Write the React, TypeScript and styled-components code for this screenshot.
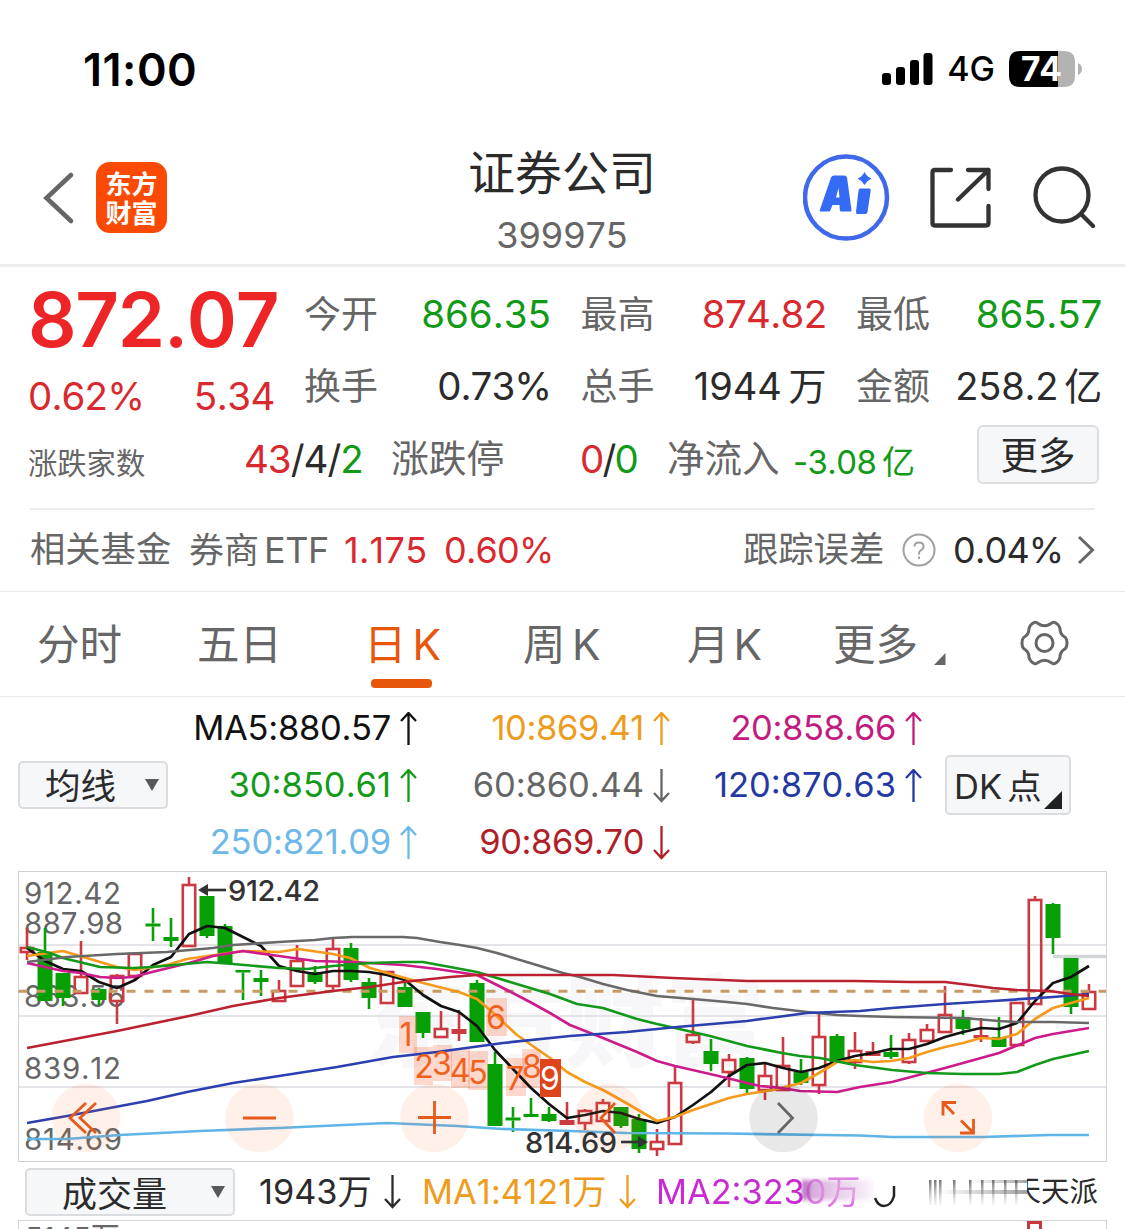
import React from 'react';
import styled, { createGlobalStyle } from 'styled-components';

const RED = '#d8292f';
const GREEN = '#119a16';
const DARK = '#2b2b2b';
const GREY = '#666666';
const ORANGE = '#e8560c';

const Global = createGlobalStyle`
  * { box-sizing: border-box; }
  html, body { margin: 0; padding: 0; background: #fff; }
  body { font-family: Inter, "Noto Sans CJK SC", sans-serif; font-kerning: none; }
  svg { display: block; flex: none; }
`;

const Screen = styled.div`
  width: 1125px;
  height: 1229px;
  overflow: hidden;
  background: #fff;
  display: flex;
  flex-direction: column;
`;

const Txt = styled.span<{ $size: number; $color?: string; $weight?: number; $ls?: number; $ws?: number }>`
  font-size: ${p => p.$size}px;
  line-height: 1;
  color: ${p => p.$color || DARK};
  font-weight: ${p => p.$weight || 400};
  letter-spacing: ${p => p.$ls || 0}px;
  word-spacing: ${p => p.$ws || 0}px;
  white-space: nowrap;
`;

/* status bar */
const StatusBar = styled.div`
  height: 138px;
  flex: none;
  padding: 0 42px 0 83px;
  display: flex;
  justify-content: space-between;
`;
const StatusSide = styled.div`
  height: 138px;
  display: flex;
  align-items: center;
  gap: 14px;
`;

/* header */
const Header = styled.header`
  height: 129px;
  flex: none;
  border-bottom: 3px solid #ececec;
  display: grid;
  grid-template-columns: 43px 53px 71px 237px 316px 83px 87px 40px 62px 41px 64px;
`;
const HeadCell = styled.div<{ $col: number; $top: number }>`
  grid-column: ${p => p.$col};
  grid-row: 1;
  padding-top: ${p => p.$top}px;
`;
const AppLogo = styled.div`
  width: 71px;
  height: 71px;
  border-radius: 14px;
  background: #fb4a04;
  color: #fff;
  font: 700 26px/29px "Noto Sans CJK SC", sans-serif;
  text-align: center;
  padding-top: 6px;
`;
const TitleBlock = styled.div`
  grid-column: 5;
  grid-row: 1;
  display: flex;
  flex-direction: column;
  align-items: center;
  padding-top: 11px;
  gap: 21px;
`;

/* quote */
const Quote = styled.section`
  height: 241px;
  flex: none;
  padding-left: 28px;
`;
const QuoteTop = styled.div`
  height: 156px;
  padding-top: 11px;
  display: flex;
`;
const PriceBlock = styled.div`
  width: 276px;
`;
const BigPrice = styled.div`
  height: 82px;
  display: flex;
  align-items: center;
`;
const PriceDelta = styled.div`
  width: 247px;
  height: 73px;
  display: flex;
  align-items: center;
  justify-content: space-between;
`;
const Stats = styled.div`
  display: grid;
  grid-template-columns: 247px 246px 246px;
  grid-template-rows: 72px 72px;
  column-gap: 29.5px;
`;
const Stat = styled.div`
  display: flex;
  align-items: center;
  justify-content: space-between;
`;
const Breadth = styled.div`
  height: 72px;
  display: grid;
  grid-template-columns: 216px 147px 189px 87px 126px 184px 122px;
  align-items: center;
`;
const Cell = styled.div<{ $shift?: number }>`
  display: flex;
  align-items: center;
  padding-top: ${p => p.$shift || 0}px;
`;
const MoreButton = styled.button`
  width: 122px;
  height: 59px;
  margin-top: -9px;
  padding: 2px 0 0;
  border: 2px solid #dcdde0;
  border-radius: 6px;
  background: #f6f7f9;
  font-family: inherit;
`;

/* fund row */
const FundRow = styled.section`
  height: 84px;
  flex: none;
  border-bottom: 1px solid #e9e9ec;
  padding: 0 30px;
`;
const FundInner = styled.div`
  height: 82px;
  border-top: 2px solid #ececec;
  display: grid;
  grid-template-columns: 159px 75px 80px 100px 299px 159px 51px 124px 18px;
  align-items: center;
`;

/* tabs */
const Tabs = styled.nav`
  height: 105px;
  flex: none;
  border-bottom: 1px solid #e9e9ec;
  padding-left: 37px;
  display: grid;
  grid-template-columns: 160px 167px 159px 164px 146px 101px 86px 49px;
`;
const Tab = styled.div<{ $active?: boolean }>`
  height: 105px;
  display: flex;
  flex-direction: column;
  padding-top: 32px;
  color: ${p => (p.$active ? ORANGE : GREY)};
  &::after {
    content: '';
    display: ${p => (p.$active ? 'block' : 'none')};
    width: 61px;
    height: 9px;
    margin: 12px 0 0 7px;
    border-radius: 4px;
    background: ${ORANGE};
  }
`;
const GearTab = styled(Tab)`
  padding-top: 28px;
`;

/* averages */
const Averages = styled.section`
  height: 174px;
  flex: none;
  padding: 2px 0 0 18px;
  display: grid;
  grid-template-columns: 150px 249px 253px 252px 23px 126px;
  align-items: center;
`;
const AvgColumn = styled.div`
  align-self: start;
  padding-top: 1px;
`;
const AvgItem = styled.div`
  height: 57px;
  display: flex;
  align-items: center;
  justify-content: flex-end;
  gap: 9px;
`;
const Dropdown = styled.div<{ $w: number; $h: number; $pl: number; $pr: number }>`
  width: ${p => p.$w}px;
  height: ${p => p.$h}px;
  border: 2px solid #dadce0;
  border-radius: 5px;
  background: #f6f7f9;
  display: flex;
  align-items: center;
  justify-content: space-between;
  padding: 0 ${p => p.$pr}px 0 ${p => p.$pl}px;
  & > span { padding-top: 4px; }
`;
const DkButton = styled(Dropdown)`
  grid-column: 6;
  & > svg { align-self: flex-end; margin-bottom: 4px; }
`;

/* chart */
const ChartWrap = styled.section`
  height: 291px;
  flex: none;
  padding-left: 18px;
`;

/* volume */
const VolumeRow = styled.section`
  height: 58px;
  flex: none;
  padding: 2px 0 0 25px;
  display: grid;
  grid-template-columns: 234px 125px 38px 197px 37px 469px;
  align-items: center;
`;
const Smear = styled.div`
  display: flex;
  align-items: center;
  height: 56px;
`;
const Faded = styled.div`
  position: relative;
  width: 218px;
  height: 40px;
  overflow: hidden;
  display: flex;
  align-items: center;
  -webkit-mask-image: linear-gradient(90deg, #000 66%, rgba(0, 0, 0, 0.6) 72%, rgba(0, 0, 0, 0.7) 100%);
  &::after {
    content: '';
    position: absolute;
    left: 146px;
    top: 8px;
    width: 72px;
    height: 20px;
    background: linear-gradient(90deg, rgba(150, 30, 160, 0.75), rgba(200, 130, 205, 0.65) 45%, rgba(240, 225, 242, 0.5));
    filter: blur(2px);
  }
`;
const HalfGlyph = styled.div`
  width: 14px;
  height: 30px;
  overflow: hidden;
  display: flex;
  justify-content: flex-end;
`;
const VolumePanel = styled.section`
  width: 1089px;
  height: 30px;
  flex: none;
  margin-left: 18px;
  border: 1px solid #d4d4d4;
  padding: 2px 0 0 6px;
  display: flex;
`;
const VolumeLabel = styled.div`
  width: 990px;
`;
const VolumeBar = styled.div`
  width: 15px;
  height: 28px;
  margin: -2px 0 0 12px;
  border: 3px solid #c9363b;
`;

const FAN = 'Inter, "Noto Sans CJK SC", sans-serif';

function Arrow({ color, down }: { color: string; down?: boolean }) {
  return (
    <svg width="17" height="34" viewBox="0 0 17 34" fill="none" stroke={color} strokeWidth="2.3">
      {down ? <path d="M8.5 0V32M1 24L8.5 32L16 24" /> : <path d="M8.5 33V1M1 9L8.5 1L16 9" />}
    </svg>
  );
}

function Caret() {
  return (
    <svg width="14" height="12" viewBox="0 0 14 12"><path d="M0 0H14L7 12Z" fill="#58595b" /></svg>
  );
}

type Candle = [number, number, number, number, 'r' | 'g' | 'f'];
// [high, body top, body bottom, low, kind]: r hollow red, f solid red, g solid green
const candles: Candle[] = [
  [928, 947, 952, 960, 'r'], [928, 952, 1001, 1001, 'g'], [973, 973, 998, 1006, 'g'], [941, 976, 993, 993, 'r'],
  [988, 989, 1000, 1005, 'g'], [974, 975, 1001, 1024, 'r'], [953, 953, 976, 981, 'r'], [908, 923.5, 926.5, 941, 'g'],
  [918, 937, 941, 947, 'g'], [877, 884, 946, 946, 'r'], [896, 896, 936, 938, 'g'], [924, 926, 964, 964, 'g'],
  [970, 970, 972.5, 1000, 'g'], [970, 978, 982, 996, 'g'], [980, 990, 1001, 1001, 'r'], [945, 960, 986, 986, 'r'],
  [966, 972, 982, 984, 'g'], [939, 948, 986, 990, 'r'], [943, 948, 980, 982, 'g'], [978, 982, 998, 1009, 'g'],
  [971, 971, 1003, 1003, 'r'], [978, 987, 1007, 1007, 'g'], [1012, 1012, 1033, 1038, 'g'], [1011, 1028, 1037, 1037, 'r'],
  [1010, 1029, 1034, 1041, 'f'], [980, 983, 1042, 1042, 'g'], [1052, 1064, 1126, 1126, 'g'], [1107, 1117.5, 1120.5, 1132, 'g'],
  [1098, 1114, 1117, 1117, 'g'], [1107, 1114, 1121, 1122, 'g'], [1102, 1120, 1125, 1125, 'f'], [1109, 1110, 1123, 1130, 'r'],
  [1099, 1102, 1121, 1121, 'r'], [1107, 1107, 1126, 1128, 'g'], [1114, 1119, 1149, 1153, 'g'], [1129, 1141, 1149, 1156, 'r'],
  [1065, 1082, 1144, 1144, 'r'], [998, 1034, 1042, 1044, 'r'], [1039, 1051, 1064, 1071, 'g'], [1054, 1059, 1072, 1087, 'r'],
  [1057, 1058, 1089, 1093, 'g'], [1064, 1075, 1090, 1100, 'r'], [1037, 1065, 1090, 1090, 'r'], [1059, 1072, 1083, 1085, 'g'],
  [1014, 1036, 1085, 1094, 'r'], [1034, 1036, 1062, 1062, 'g'], [1032, 1050, 1062, 1069, 'r'], [1042, 1051, 1056, 1056, 'f'],
  [1035, 1052, 1057, 1059, 'g'], [1033, 1039, 1062, 1064, 'r'], [1024, 1029, 1041, 1041, 'r'], [986, 1014, 1032, 1032, 'r'],
  [1010, 1017, 1029, 1035, 'g'], [1018, 1035, 1038, 1042, 'f'], [1017, 1037, 1047, 1047, 'g'], [1002, 1002, 1045, 1045, 'r'],
  [896, 899, 1004, 1004, 'r'], [903, 904, 938, 954, 'g'], [958, 958, 1007, 1014, 'g'], [984, 991, 1009, 1010, 'r'],
];

const lines: [string, string][] = [
  ['#5fb4e8', '27,1139 67,1139 120,1135 200,1131 279,1128 387,1123 457,1126 503,1129 570,1131 627,1133 727,1133.5 860,1135.5 892,1137 983,1137 1050,1135 1089,1135'],
  ['#111111', '27,948 45,961 63,969 81,971 99,982 117,988 135,980 153,965 171,957 189,934 207,926 225,928 243,937 261,946 279,966 297,971 315,974 333,971 351,971 369,972 387,975 405,980 423,995 441,1006 459,1012 477,1026 495,1050 513,1069 531,1088 549,1104 567,1118 585,1115 603,1111 621,1113 639,1119 657,1123 675,1117 693,1105 711,1092 729,1076 747,1065 765,1063 783,1068 801,1072 819,1068 837,1061 855,1056 873,1053 891,1049 909,1049 927,1044 945,1037 963,1032 981,1028 999,1029 1017,1023 1035,1001 1053,983 1071,977 1089,966'],
  ['#f59a1b', '27,956 63,951 90,959 117,967 135,970 167,965 187,959 243,951 279,952 298,949 333,954 350,958 370,968 405,978 423,983 459,992 477,999 490,1010 517,1035 550,1058 567,1072 585,1082 603,1090 621,1100 657,1121 675,1117 693,1110 711,1104 729,1098 747,1094 773,1090 801,1083 819,1073 837,1062 855,1060 873,1062 891,1061 909,1058 927,1052 945,1047 963,1043 981,1038 999,1039 1017,1034 1035,1019 1053,1008 1089,998'],
  ['#cc1c8c', '27,963 63,971 81,973 100,977 117,978 133,977 152,972 189,963 213,956 243,951 279,956 315,961 353,962 403,965 437,969 477,975 503,988 530,1002 550,1013 570,1025 603,1038 637,1052 657,1061 675,1066 710,1074 727,1078 747,1083 760,1086 782,1088 800,1091 837,1092 860,1087 892,1082 945,1068 963,1063 981,1058 999,1053 1035,1038 1053,1034 1089,1028'],
  ['#12991a', '27,947 50,953 63,958 100,967 133,968 152,967 207,962 233,964 279,968 307,969 333,966 370,963 403,962 423,962 450,967 477,972 510,982 550,994 577,1004 603,1008 637,1019 657,1024 675,1028 710,1036 747,1046 782,1053 800,1056 820,1058 840,1062 855,1065 892,1070 927,1073 963,1074 999,1074 1017,1072 1035,1065 1053,1059 1089,1051'],
  ['#696969', '27,962 67,957 117,954 167,952 213,948 233,945 279,942 315,940 333,938 353,937 403,937 417,938 440,942 460,945 477,948 497,953 530,963 563,973 580,977 603,984 627,990 657,996 693,999 727,1002 747,1004 773,1008 807,1012 837,1015 860,1016 892,1017 963,1018 999,1021 1017,1022 1053,1022 1089,1023'],
  ['#2b3fb0', '27,1123 67,1116 147,1101 187,1092 233,1083 279,1076 337,1067 393,1057 437,1052 503,1043 570,1036 627,1032 677,1027 747,1021 807,1013 860,1011 892,1008 945,1004 993,1001 1053,997 1089,994'],
  ['#bb2230', '27,1048 117,1031 189,1016 233,1006 279,998 333,991 370,987 403,982 450,977 477,975 613,975 673,978 747,981 855,981 910,982 945,982 970,985 993,988 1017,990 1050,991 1070,994 1089,996'],
];

const marks: [string, number, number, number, number, number, number][] = [
  ['1', 399, 1016, 18, 37, 406, 1046], ['2', 414, 1047, 19, 38, 424, 1078], ['3', 433, 1045, 19, 36, 442, 1075],
  ['4', 451, 1049, 19, 39, 460, 1082], ['5', 468, 1051, 20, 39, 478, 1084], ['6', 486, 998, 21, 38, 496, 1029],
  ['7', 506, 1058, 20, 38, 515, 1090], ['8', 522, 1049, 19, 39, 532, 1078],
];

const axis: [string, number, number][] = [
  ['912.42', 904, 97], ['887.98', 934, 99], ['863.56', 1007, 101], ['839.12', 1079, 97], ['814.69', 1150, 98],
];

function Chart() {
  return (
    <svg width="1089" height="291" viewBox="18 871 1089 291" fill="none" fontFamily={FAN}>
      <text x="365" y="1059" fontSize="100" fontWeight="900" fill="#f7f7f9" textLength="400">东方财富</text>
      {[945, 1016, 1087].map(y => <path key={y} d={`M19 ${y}H1106`} stroke="#e4e4e8" strokeWidth="2" />)}
      <rect x="18.5" y="871.5" width="1088" height="290" stroke="#d2d2d2" />
      <path d="M1053 956.5H1106" stroke="#d3d6d8" strokeWidth="3.5" />
      {axis.map(([t, y, w]) => (
        <text key={t} x="24" y={y} fontSize="29.5" fill="#666" textLength={w}>{t}</text>
      ))}
      {candles.map(([hi, top, bot, lo, kind], i) => {
        const x = 27 + i * 18;
        const color = kind === 'g' ? '#06a006' : '#cb3a40';
        return (
          <g key={i} stroke={color} strokeWidth="2.6">
            <path d={`M${x} ${hi}V${top}M${x} ${bot}V${lo}`} />
            {kind === 'r'
              ? <rect x={x - 6.2} y={top + 1} width="12.4" height={bot - top - 1} />
              : <rect x={x - 7.5} y={top} width="15" height={bot - top} fill={color} stroke="none" />}
          </g>
        );
      })}
      <path d="M18.5 991.3H1106" stroke="#c69b63" strokeWidth="3" strokeDasharray="9 9" />
      {marks.map(([t, x, y, w, h]) => <rect key={t} x={x} y={y} width={w} height={h} fill="#fa5a28" fillOpacity="0.24" />)}
      {lines.map(([c, p]) => <polyline key={c} points={p} stroke={c} strokeWidth="2.7" strokeLinejoin="round" />)}
      {marks.map(([t, , , , , tx, ty]) => (
        <text key={t} x={tx} y={ty} fontSize="32" fill="#f2611c" textAnchor="middle">{t}</text>
      ))}
      <rect x="540" y="1059" width="21" height="38" fill="#df451d" />
      <text x="550" y="1090" fontSize="32" fill="#fff" textAnchor="middle">9</text>
      {[86, 259.5, 434.5, 609, 958].map(x => <circle key={x} cx={x} cy="1118" r="34.3" fill="#fb6a28" fillOpacity="0.1" />)}
      <circle cx="783.5" cy="1118" r="34.3" fill="#000" fillOpacity="0.09" />
      <g stroke="#e65b1c" strokeWidth="2.8">
        <path d="M86 1103L70 1118L86 1133M96 1103L80 1118L96 1133" />
        <path d="M243 1118H276" />
        <path d="M418 1117.5H451M434.5 1101V1134" />
        <path d="M615 1103L601 1118L615 1133" />
        <path d="M956 1102.500H943V1115.500M943 1102.500L954 1114M973.500 1119V1133H960M973.500 1133L961 1120.500" />
      </g>
      <path d="M778 1103L792.500 1118L778 1133" stroke="#666" strokeWidth="2.8" />
      <text x="228" y="901" fontSize="29" fontWeight="500" fill="#333" textLength="92">912.42</text>
      <path d="M226 890H206" stroke="#333" strokeWidth="2.6" />
      <path d="M198 890L208 884V896Z" fill="#333" />
      <text x="525" y="1153" fontSize="29" fontWeight="500" fill="#333" textLength="92">814.69</text>
      <path d="M621 1142H640" stroke="#333" strokeWidth="2.6" />
      <path d="M648 1142L638 1136V1148Z" fill="#333" />
    </svg>
  );
}

export default function App() {
  return (
    <Screen>
      <Global />
      <StatusBar>
        <StatusSide><Txt $size={45} $weight={600} $color="#000" $ls={0.5}>11:00</Txt></StatusSide>
        <StatusSide>
          <svg width="52" height="34" viewBox="0 0 52 34">
            <rect x="1" y="21" width="9" height="12" rx="3" />
            <rect x="15" y="15" width="9" height="18" rx="3" />
            <rect x="29" y="8" width="9" height="25" rx="3" />
            <rect x="42.500" y="1" width="9" height="32" rx="3" />
          </svg>
          <Txt $size={34} $weight={500} $color="#000">4G</Txt>
          <svg width="74" height="36" viewBox="0 0 74 36">
            <path d="M49 0H55Q66 0 66 11V25Q66 36 55 36H49Z" fill="#b3b3b3" />
            <path d="M11 0H49V36H11Q0 36 0 25V11Q0 0 11 0Z" fill="#000" />
            <path d="M69 12Q73 14 73 18Q73 22 69 24Z" fill="#b3b3b3" />
            <text x="12" y="30" fontFamily="Inter, sans-serif" fontSize="33.500" fontWeight="700" fill="#fff" textLength="41">74</text>
          </svg>
        </StatusSide>
      </StatusBar>

      <Header>
        <HeadCell $col={2} $top={33}>
          <svg width="32" height="54" viewBox="0 0 32 54" fill="none" stroke="#666" strokeWidth="4.600" strokeLinecap="round">
            <path d="M28 4L3.500 27L28 50" />
          </svg>
        </HeadCell>
        <HeadCell $col={3} $top={24}>
          <AppLogo>东方<br />财富</AppLogo>
        </HeadCell>
        <TitleBlock>
          <Txt $size={47}>证券公司</Txt>
          <Txt $size={36} $color={GREY}>399975</Txt>
        </TitleBlock>
        <HeadCell $col={7} $top={16}>
          <svg width="87" height="87" viewBox="0 0 87 87">
            <circle cx="43" cy="43.500" r="41" fill="none" stroke="#3f68ea" strokeWidth="4.500" />
            <path fillRule="evenodd" fill="#356af5" d="M28 23.500Q29 21.500 31 21.500H41Q43.500 21.500 44 23.500L48.500 56Q48.500 57.500 47 57.500H38.500Q37 57.500 36.800 56L36.500 51H29.500L27.500 56Q27 57.500 25.500 57.500H18Q16 57.500 17 55.500ZM33 43.500H36.500L35.500 34Z" />
            <path fill="#356af5" d="M57.500 34.500H66Q68 34.500 67.700 36.500L64.500 58Q64.200 60 62.500 60H54.500Q52.700 60 53 58L55.500 36.500Q55.800 34.500 57.500 34.500Z" />
            <path fill="#356af5" d="M61.500 18Q64 23 68.500 24.500Q64 26.500 61.500 31Q59 26.500 54.500 24.500Q59 23 61.500 18Z" />
          </svg>
        </HeadCell>
        <HeadCell $col={9} $top={29}>
          <svg width="62" height="62" viewBox="0 0 62 62" fill="none" stroke="#333" strokeWidth="4.300" strokeLinecap="round" strokeLinejoin="round">
            <path d="M21 3H5Q2.500 3 2.500 5.500V56Q2.500 58.500 5 58.500H56Q58.500 58.500 58.500 56V39M38 3H58.500V22M58.500 3L28 32.500" />
          </svg>
        </HeadCell>
        <HeadCell $col={11} $top={27}>
          <svg width="64" height="64" viewBox="0 0 64 64" fill="none" stroke="#333" strokeWidth="4.300" strokeLinecap="round">
            <circle cx="29" cy="30" r="26.500" /><path d="M49 50L60 61" />
          </svg>
        </HeadCell>
      </Header>

      <Quote>
        <QuoteTop>
          <PriceBlock>
            <BigPrice><Txt $size={76} $weight={600} $color="#ee2526" $ls={-1.3}>872.07</Txt></BigPrice>
            <PriceDelta>
              <Txt $size={38.500} $color={RED} $ls={-0.9}>0.62%</Txt>
              <Txt $size={38.500} $color={RED} $ls={-0.5}>5.34</Txt>
            </PriceDelta>
          </PriceBlock>
          <Stats>
            <Stat><Txt $size={37} $color={GREY}>今开</Txt><Txt $size={38.500} $color={GREEN}>866.35</Txt></Stat>
            <Stat><Txt $size={37} $color={GREY}>最高</Txt><Txt $size={38.500} $color={RED} $ls={-0.7}>874.82</Txt></Stat>
            <Stat><Txt $size={37} $color={GREY}>最低</Txt><Txt $size={38.500} $color={GREEN} $ls={-0.2}>865.57</Txt></Stat>
            <Stat><Txt $size={37} $color={GREY}>换手</Txt><Txt $size={38.500} $ls={-1}>0.73%</Txt></Stat>
            <Stat><Txt $size={37} $color={GREY}>总手</Txt><Txt $size={38} $ws={-4}>1944 万</Txt></Stat>
            <Stat><Txt $size={37} $color={GREY}>金额</Txt><Txt $size={38} $ls={-0.2} $ws={-4.500}>258.2 亿</Txt></Stat>
          </Stats>
        </QuoteTop>
        <Breadth>
          <Cell $shift={10}><Txt $size={29.300} $color={GREY}>涨跌家数</Txt></Cell>
          <Cell>
            <Txt $size={38.500} $color={RED} $ls={-1}>43</Txt><Txt $size={38.500} $ls={-1}>/4/</Txt><Txt $size={38.500} $color={GREEN}>2</Txt>
          </Cell>
          <Cell><Txt $size={37.800} $color={GREY}>涨跌停</Txt></Cell>
          <Cell><Txt $size={38.500} $color={RED} $ls={-1.8}>0</Txt><Txt $size={38.500} $ls={-1.8}>/</Txt><Txt $size={38.500} $color={GREEN}>0</Txt></Cell>
          <Cell><Txt $size={37.500} $color={GREY}>净流入</Txt></Cell>
          <Cell $shift={6}><Txt $size={33} $color={GREEN} $ls={-0.6} $ws={-3}>-3.08 亿</Txt></Cell>
          <MoreButton><Txt $size={37.500}>更多</Txt></MoreButton>
        </Breadth>
      </Quote>

      <FundRow>
        <FundInner>
          <Txt $size={35.300} $color={GREY}>相关基金</Txt>
          <Txt $size={35} $color={GREY}>券商</Txt>
          <Txt $size={36} $color={GREY} $ls={-0.4}>ETF</Txt>
          <Txt $size={36} $color={RED} $ls={0.3}>1.175</Txt>
          <Txt $size={36} $color={RED} $ls={-0.8}>0.60%</Txt>
          <Txt $size={35.300} $color={GREY}>跟踪误差</Txt>
          <svg width="34" height="34" viewBox="0 0 34 34" fill="none" stroke="#a0a0a0" strokeWidth="2">
            <circle cx="17" cy="17" r="15.500" />
            <path d="M12.500 13.500Q12.500 9.500 17 9.500Q21.500 9.500 21.500 13.500Q21.500 16 19 17.200Q17 18.200 17 20.500V21.500M17 23.500V26" />
          </svg>
          <Txt $size={36} $ls={-0.8}>0.04%</Txt>
          <svg width="18" height="30" viewBox="0 0 18 30" fill="none" stroke="#666" strokeWidth="3"><path d="M2 2L15.500 15L2 28" /></svg>
        </FundInner>
      </FundRow>

      <Tabs>
        <Tab><Txt $size={42.500} $color="inherit">分时</Txt></Tab>
        <Tab><Txt $size={42.500} $color="inherit">五日</Txt></Tab>
        <Tab $active><Txt $size={42.500} $color="inherit" $ws={-6}>日 K</Txt></Tab>
        <Tab><Txt $size={42.500} $color="inherit" $ws={-5.500}>周 K</Txt></Tab>
        <Tab><Txt $size={42.500} $color="inherit" $ws={-8}>月 K</Txt></Tab>
        <Tab><Txt $size={42.500} $color="inherit">更多</Txt></Tab>
        <Tab>
          <svg width="12" height="42" viewBox="0 0 12 42"><path d="M11.500 29V41H0Z" fill="#666" /></svg>
        </Tab>
        <GearTab>
          <svg width="49" height="46" viewBox="0 0 49 46" fill="none" stroke="#666" strokeWidth="3" strokeLinejoin="round">
            <path d="M14 2.500Q16 1.500 18 3.500Q24.500 8 31 3.500Q33 1.500 35 2.500Q39 4.500 40 8.500Q40 14 44 16.500Q47 18 47 23Q47 28 44 29.500Q40 32 40 37.500Q39 41.500 35 43.500Q33 44.500 31 42.500Q24.500 38 18 42.500Q16 44.500 14 43.500Q10 41.500 9 37.500Q9 32 5 29.500Q2 28 2 23Q2 18 5 16.500Q9 14 9 8.500Q10 4.500 14 2.500Z" />
            <circle cx="24.500" cy="23" r="8.500" />
          </svg>
        </GearTab>
      </Tabs>

      <Averages>
        <Dropdown $w={150} $h={48} $pl={25} $pr={7}><Txt $size={35.500}>均线</Txt><Caret /></Dropdown>
        <AvgColumn>
          <AvgItem><Txt $size={34.500} $ls={-0.3} $color="#111">MA5:880.57</Txt><Arrow color="#111" /></AvgItem>
          <AvgItem><Txt $size={34.500} $color="#129a18">30:850.61</Txt><Arrow color="#129a18" /></AvgItem>
          <AvgItem><Txt $size={34.500} $ls={-0.2} $color="#6cb8e8">250:821.09</Txt><Arrow color="#6cb8e8" /></AvgItem>
        </AvgColumn>
        <AvgColumn>
          <AvgItem><Txt $size={34.500} $ls={-0.4} $color="#ee9c20">10:869.41</Txt><Arrow color="#ee9c20" /></AvgItem>
          <AvgItem><Txt $size={34.500} $ls={-0.1} $color="#666">60:860.44</Txt><Arrow color="#666" down /></AvgItem>
          <AvgItem><Txt $size={34.500} $ls={-0.4} $color="#b01e2a">90:869.70</Txt><Arrow color="#b01e2a" down /></AvgItem>
        </AvgColumn>
        <AvgColumn>
          <AvgItem><Txt $size={34.500} $ls={-0.4} $color="#c31c80">20:858.66</Txt><Arrow color="#c31c80" /></AvgItem>
          <AvgItem><Txt $size={34.500} $color="#2539a3">120:870.63</Txt><Arrow color="#2539a3" /></AvgItem>
        </AvgColumn>
        <DkButton $w={126} $h={60} $pl={7} $pr={7}>
          <Txt $size={34.500} $ws={-4.500}>DK 点</Txt>
          <svg width="18" height="18" viewBox="0 0 18 18"><path d="M18 0V18H0Z" fill="#222" /></svg>
        </DkButton>
      </Averages>

      <ChartWrap><Chart /></ChartWrap>

      <VolumeRow>
        <Dropdown $w={210} $h={48} $pl={35} $pr={8}><Txt $size={35}>成交量</Txt><Caret /></Dropdown>
        <Txt $size={34.300}>1943万</Txt>
        <Arrow color="#2b2b2b" down />
        <Txt $size={34.300} $color="#ee9c20" $ls={0.1}>MA1:4121万</Txt>
        <Arrow color="#ee9c20" down />
        <Smear>
          <Faded><Txt $size={34.300} $color="#c92bd0">MA2:3230万</Txt></Faded>
          <svg width="153" height="48" viewBox="0 0 153 48">
            <defs>
              <linearGradient id="streak" x1="0" x2="0" y1="0" y2="1">
                <stop offset="0" stopColor="#444" stopOpacity="0.75" /><stop offset="1" stopColor="#999" stopOpacity="0.1" />
              </linearGradient>
              <linearGradient id="haze" x1="0" x2="1" y1="0" y2="0">
                <stop offset="0" stopColor="#777" stopOpacity="0" /><stop offset="1" stopColor="#555" stopOpacity="0.55" />
              </linearGradient>
            </defs>
            <path d="M1 30Q4 38 10 38Q17 38 20 28V18" fill="none" stroke="#222" strokeWidth="2.500" />
            {[55, 60, 65, 79, 95, 107, 118, 130, 141].map(x => (
              <rect key={x} x={x} y="12" width="2.500" height="25" fill="url(#streak)" />
            ))}
            <rect x="95" y="12" width="58" height="3" fill="url(#haze)" />
            <rect x="60" y="22" width="93" height="4" fill="url(#haze)" />
          </svg>
          <HalfGlyph><Txt $size={28.500}>天</Txt></HalfGlyph>
          <Txt $size={28.500}>天派</Txt>
        </Smear>
      </VolumeRow>
      <VolumePanel>
        <VolumeLabel><Txt $size={29} $color={GREY}>5145万</Txt></VolumeLabel>
        <VolumeBar />
      </VolumePanel>
    </Screen>
  );
}
